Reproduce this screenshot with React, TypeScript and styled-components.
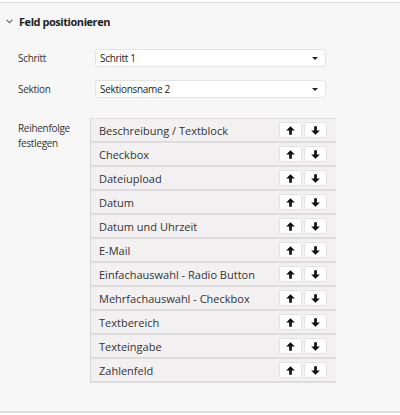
import React from "react";
import styled, { createGlobalStyle } from "styled-components";

const Global = createGlobalStyle`
  html, body { margin: 0; padding: 0; background: #ffffff; }
  body { font-family: "Open Sans", "Noto Sans", sans-serif; color: #333; }
`;

const Panel = styled.section`
  margin-top: 2px;
  border-top: 1px solid #dedede;
  border-bottom: 2px solid #dedede;
  background: #f7f7f7;
  height: 411px;
  box-sizing: border-box;
`;

const Header = styled.div`
  display: flex;
  align-items: center;
  gap: 6px;
  padding: 10px 0 0 6px;
  height: 16px;
  font-size: 11px;
  font-weight: 700;
  letter-spacing: -0.45px;
  color: #222;
`;

const Body = styled.div`
  padding: 20px 0 0 18px;
  display: grid;
  grid-template-columns: 72px 246px;
  row-gap: 13px;
  align-items: center;
`;

const Label = styled.div<{ $top?: boolean }>`
  font-size: 10px;
  letter-spacing: -0.3px;
  line-height: 15px;
  color: #333;
  align-self: ${(p) => (p.$top ? "start" : "center")};
  padding-top: ${(p) => (p.$top ? "10px" : "0")};
`;

const Select = styled.div`
  margin-left: 5px;
  width: 231px;
  height: 18px;
  box-sizing: border-box;
  background: #fff;
  border: 1px solid #e3e3e3;
  border-radius: 3px;
  display: flex;
  align-items: center;
  justify-content: space-between;
  padding: 0 7px 0 4px;
  font-size: 10px;
  letter-spacing: -0.3px;
  color: #222;
`;

const Caret = styled.span`
  width: 0;
  height: 0;
  border-left: 3px solid transparent;
  border-right: 3px solid transparent;
  border-top: 3px solid #222;
`;

const List = styled.div`
  margin-top: 7px;
  border-left: 1px solid #d6d6d6;
  border-top: 1px solid #dedede;
  background: #f2f0f0;
`;

const Row = styled.div`
  display: flex;
  align-items: center;
  height: 22px;
  border-bottom: 2px solid #dedcdc;
  padding: 0 9px 0 8px;
  font-size: 11px;
  color: #333;
`;

const RowText = styled.span`
  flex: 1;
`;

const Btns = styled.div`
  display: flex;
  gap: 2px;
`;

const Btn = styled.button`
  width: 23px;
  height: 16px;
  padding: 0;
  background: #fff;
  border: 1px solid #e2e2e2;
  border-radius: 2px;
  display: flex;
  align-items: center;
  justify-content: center;
`;

const Arrow = ({ down }: { down?: boolean }) => (
  <svg width="9" height="9" viewBox="0 0 10 10" style={{ transform: down ? "rotate(180deg)" : undefined }}>
    <path d="M5 0.2 L9.8 5.1 L6.5 5.1 L6.5 9.8 L3.5 9.8 L3.5 5.1 L0.2 5.1 Z" fill="#111" />
  </svg>
);

const Chevron = () => (
  <svg width="7" height="5" viewBox="0 0 7 5">
    <path d="M0.7 0.8 L3.5 3.8 L6.3 0.8" fill="none" stroke="#555" strokeWidth="1.1" />
  </svg>
);

const items = [
  "Beschreibung / Textblock",
  "Checkbox",
  "Dateiupload",
  "Datum",
  "Datum und Uhrzeit",
  "E-Mail",
  "Einfachauswahl - Radio Button",
  "Mehrfachauswahl - Checkbox",
  "Textbereich",
  "Texteingabe",
  "Zahlenfeld",
];

export default function App() {
  return (
    <>
      <Global />
      <Panel>
        <Header>
          <Chevron />
          <span>Feld positionieren</span>
        </Header>
        <Body>
          <Label>Schritt</Label>
          <Select>
            <span>Schritt 1</span>
            <Caret />
          </Select>
          <Label>Sektion</Label>
          <Select>
            <span>Sektionsname 2</span>
            <Caret />
          </Select>
          <Label $top>
            Reihenfolge
            <br />
            festlegen
          </Label>
          <List>
            {items.map((it) => (
              <Row key={it}>
                <RowText>{it}</RowText>
                <Btns>
                  <Btn>
                    <Arrow />
                  </Btn>
                  <Btn>
                    <Arrow down />
                  </Btn>
                </Btns>
              </Row>
            ))}
          </List>
        </Body>
      </Panel>
    </>
  );
}
